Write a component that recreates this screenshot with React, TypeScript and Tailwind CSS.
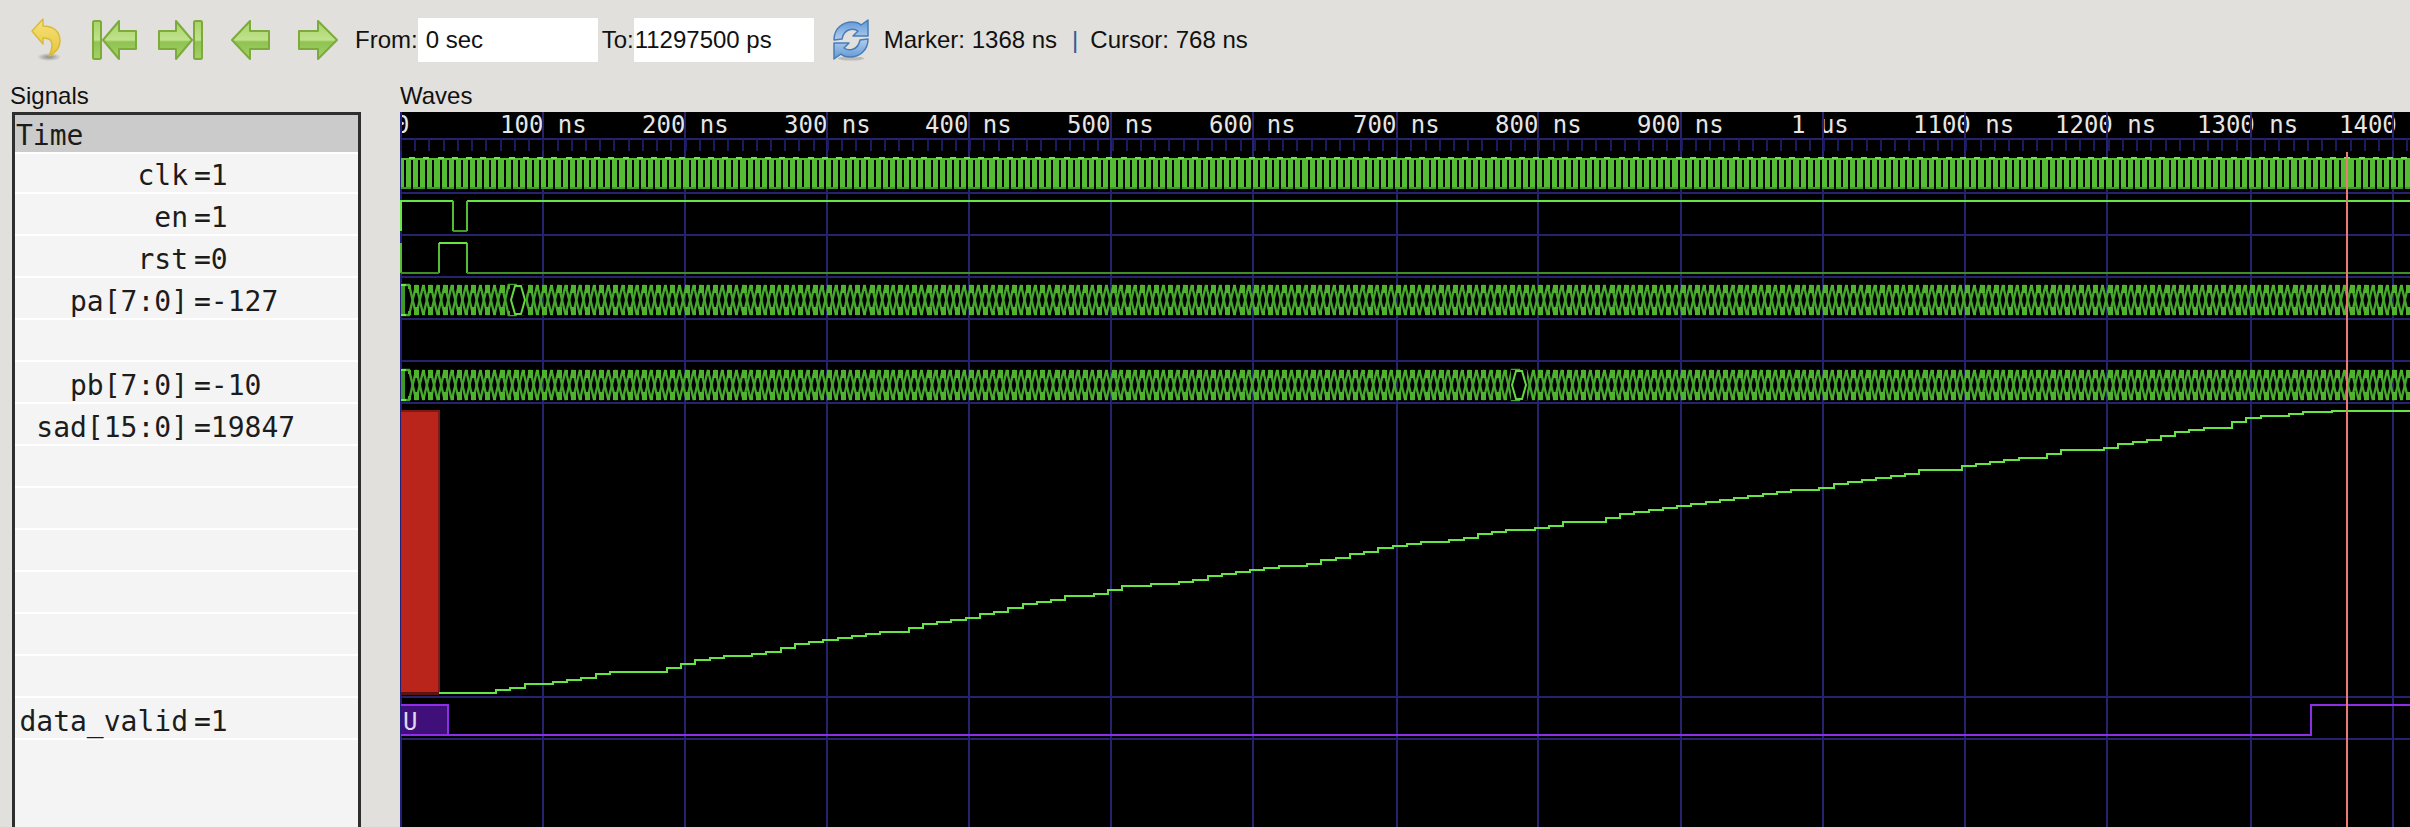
const GRID = [543, 685, 827, 969, 1111, 1253, 1397, 1538, 1681, 1823, 1965, 2107, 2251, 2393];
const ROW_LINES = [193, 235, 277, 319, 361, 403, 697, 739];

const LABELS: [number, string][] = [
  [395, "0"],
  [500, "100 ns"],
  [642, "200 ns"],
  [784, "300 ns"],
  [925, "400 ns"],
  [1067, "500 ns"],
  [1209, "600 ns"],
  [1353, "700 ns"],
  [1495, "800 ns"],
  [1637, "900 ns"],
  [1791, "1 us"],
  [1913, "1100 ns"],
  [2055, "1200 ns"],
  [2197, "1300 ns"],
  [2339, "1400"],
];

const SIGNALS = [
  { name: "clk", value: "=1" },
  { name: "en", value: "=1" },
  { name: "rst", value: "=0" },
  { name: "pa[7:0]", value: "=-127" },
  { name: "", value: "" },
  { name: "pb[7:0]", value: "=-10" },
  { name: "sad[15:0]", value: "=19847" },
  { name: "", value: "" },
  { name: "", value: "" },
  { name: "", value: "" },
  { name: "", value: "" },
  { name: "", value: "" },
  { name: "", value: "" },
  { name: "data_valid", value: "=1" },
];

// hand-read points of the sad trace
const SAD: [number, number][] = [
  [496, 693], [543, 684], [588, 680], [603, 675], [639, 671], [672, 671], [703, 661], [746, 655],
  [766, 655], [810, 643], [848, 639], [909, 631], [937, 623], [969, 619], [1001, 613], [1045, 603],
  [1078, 597], [1111, 593], [1136, 587], [1164, 585], [1193, 583], [1221, 577], [1240, 574], [1272, 569],
  [1320, 564], [1371, 553], [1397, 547], [1422, 543], [1463, 541], [1501, 533], [1538, 529], [1577, 523],
  [1613, 521], [1640, 513], [1681, 507], [1750, 497], [1823, 489], [1868, 481], [1933, 471], [1964, 469],
  [1993, 463], [2047, 457], [2069, 451], [2107, 449], [2162, 439], [2184, 433], [2204, 429], [2232, 427],
  [2250, 421], [2262, 418], [2285, 416], [2300, 415], [2312, 411],
];

function sadAt(x: number) {
  for (let i = 1; i < SAD.length; i++) {
    if (x <= SAD[i][0]) {
      const [x0, y0] = SAD[i - 1];
      const [x1, y1] = SAD[i];
      return y0 + ((x - x0) / (x1 - x0)) * (y1 - y0);
    }
  }
  return 411;
}

function sadPath() {
  let d = "M439 693 H496";
  for (let x = 496; x < 2320; x += 14.23) {
    const y = Math.round(sadAt(x + 14) / 2) * 2;
    d += ` V${y} H${(x + 14.23).toFixed(1)}`;
  }
  return d + " V411 H2410";
}

// the clk trace is too fine for the pixels: it reads as bars with black slits
function clkSlits() {
  let up = "";
  let down = "";
  let tops = "";
  for (let k = 0; k * 7.115 < 2012; k++) {
    const x = Math.round(405 + k * 7.115);
    if (k % 2 === 0) {
      up += `M${x} 160 V187 `;
    } else {
      down += `M${x} 160 V189 `;
      tops += `M${x - 3} 158 H${x + 3} `;
    }
  }
  return { up, down, tops };
}

function busPaths(top: number, bottom: number, eye: number) {
  const step = 7.115;
  let a = `M402 ${top}`;
  let b = `M402 ${bottom}`;
  let blocks = "";
  let small = "";
  let high = false;
  for (let k = 1; k * step < 2012; k++) {
    const x = 402 + k * step;
    const nearEye = Math.abs(x - eye) < 9;
    if (!nearEye) {
      const edge = `M${Math.round(x)} `;
      if (k % 2 === 0) blocks += `${edge}${top} V${top + 8} ${edge}${bottom - 8} V${bottom} `;
      else small += `${edge}${top} V${top + 4} ${edge}${bottom - 4} V${bottom} `;
    }
    if (Math.abs(x - eye) >= step / 2) high = !high;
    a += ` L${x.toFixed(1)} ${high ? top : bottom}`;
    b += ` L${x.toFixed(1)} ${high ? bottom : top}`;
  }
  return { a, b, blocks, small };
}

function Bus({ top, eye }: { top: number; eye: number }) {
  const bottom = top + 30;
  const mid = top + 15;
  const { a, b, blocks, small } = busPaths(top, bottom, eye);
  return (
    <g>
      <path d={a} stroke="#45a52c" strokeWidth="2.4" fill="none" />
      <path d={b} stroke="#45a52c" strokeWidth="2.4" fill="none" />
      <path d={blocks} stroke="#4fb32e" strokeWidth="5" fill="none" shapeRendering="crispEdges" />
      <path d={small} stroke="#4fb32e" strokeWidth="3" fill="none" shapeRendering="crispEdges" />
      {/* gap in the transitions, where the value holds for two clocks */}
      <path
        d={`M${eye - 8} ${top} H${eye + 8} V${bottom} H${eye - 8} Z`}
        fill="#000"
        shapeRendering="crispEdges"
      />
      <path
        d={`M${eye - 7} ${mid} L${eye - 3} ${top + 1} H${eye + 3} L${eye + 7} ${mid} L${eye + 3} ${bottom - 1} H${eye - 3} Z`}
        stroke="#63d840"
        strokeWidth="2"
        fill="none"
      />
      <path d={`M403 ${top} V${bottom}`} stroke="#3f9a2a" strokeWidth="4" shapeRendering="crispEdges" />
      <path d={`M401 ${top} H406 M401 ${bottom} H406`} stroke="#6ce648" strokeWidth="2" shapeRendering="crispEdges" />
    </g>
  );
}

function WaveChart() {
  const clk = clkSlits();
  const ticks: number[] = [];
  for (let k = 0; k < 142; k++) ticks.push(Math.round(401 + k * 14.23));

  return (
    <svg
      width="2010"
      height="715"
      viewBox="400 112 2010 715"
      className="block bg-black font-['DejaVu_Sans_Mono',monospace] text-[24px]"
    >
      {LABELS.map(([x, label]) => (
        <text key={label} x={x} y="133" fill="#e6e6e6" xmlSpace="preserve">
          {label}
        </text>
      ))}

      <g shapeRendering="crispEdges" fill="none">
        <path d="M401 112 V827" stroke="#20207c" strokeWidth="2" />
        {GRID.map((x) => (
          <path key={x} d={`M${x} 112 V827`} stroke="#25226e" strokeWidth="2" />
        ))}
        <path d="M400 139 H2410" stroke="#25226e" strokeWidth="2" />
        {ticks.map((x) => (
          <path key={x} d={`M${x} 139 V151`} stroke="#1d1b5c" strokeWidth="2" />
        ))}
        {ROW_LINES.map((y) => (
          <path key={y} d={`M400 ${y} H2410`} stroke="#25226e" strokeWidth="2" />
        ))}

        {/* clk */}
        <rect x="401" y="158" width="2009" height="31" fill="#54bd33" />
        <path d="M401 188 H2410" stroke="#3f9a2a" strokeWidth="2" />
        <path d={clk.up} stroke="#000" strokeWidth="2" />
        <path d={clk.down} stroke="#000" strokeWidth="2" />
        <path d={clk.tops} stroke="#6ce648" strokeWidth="2" />

        {/* en */}
        <path d="M401 231 V201 H453 M467 201 H2410" stroke="#66e644" strokeWidth="2" />
        <path d="M453 201 V231 M467 201 V231" stroke="#54bd33" strokeWidth="2" />
        <path d="M453 231 H467" stroke="#3f9a2a" strokeWidth="2" />

        {/* rst */}
        <path d="M401 243 V273 M439 243 V273 M467 243 V273" stroke="#54bd33" strokeWidth="2" />
        <path d="M439 243 H467" stroke="#66e644" strokeWidth="2" />
        <path d="M401 273 H439 M467 273 H2410" stroke="#3f8f28" strokeWidth="2" />

        {/* sad */}
        <rect x="401" y="411" width="38" height="282" fill="#b9251a" />
        <path d="M401 411 H439 V693" stroke="#7c1b14" strokeWidth="2" />
        <path d="M401 693 H439" stroke="#5f130e" strokeWidth="3" />
        <path d={sadPath()} stroke="#66e644" strokeWidth="2" />

        {/* data_valid */}
        <rect x="401" y="705" width="47" height="30" fill="#40107a" />
        <path d="M401 705 H448 V735 M401 735 H2311 V705 H2410" stroke="#8f2ee8" strokeWidth="2" />
      </g>

      <Bus top={285} eye={518} />
      <Bus top={370} eye={1519} />

      <text x="403" y="730" fill="#e0d8ee">
        U
      </text>

      <path d="M2347 152 V827" stroke="#ea7b74" strokeWidth="2" shapeRendering="crispEdges" />
    </svg>
  );
}

function ArrowFill({ id }: { id: string }) {
  return (
    <linearGradient id={id} x1="0" y1="0" x2="0" y2="1">
      <stop offset="0" stopColor="#a9d368" />
      <stop offset="0.5" stopColor="#bfe28b" />
      <stop offset="0.55" stopColor="#8fc352" />
      <stop offset="1" stopColor="#a6d067" />
    </linearGradient>
  );
}

function GreenArrow({ points, bar, width }: { points: string; bar?: number; width: number }) {
  const id = `arrow-${width}-${bar ?? 0}-${points.length}-${points.slice(0, 2)}`;
  return (
    <svg width={width} height="40" viewBox={`0 0 ${width} 40`} className="shrink-0">
      <defs>
        <ArrowFill id={id} />
      </defs>
      {bar !== undefined && (
        <rect x={bar + 1} y="1" width="8" height="38" rx="1.5" fill={`url(#${id})`} stroke="#7cab3c" strokeWidth="2" />
      )}
      <polygon points={points} fill={`url(#${id})`} stroke="#7cab3c" strokeWidth="2" strokeLinejoin="round" />
    </svg>
  );
}

function UndoIcon() {
  return (
    <svg width="32" height="44" viewBox="0 0 32 44" className="shrink-0">
      <defs>
        <linearGradient id="undo-fill" x1="0" y1="0" x2="0" y2="1">
          <stop offset="0" stopColor="#f6e27a" />
          <stop offset="1" stopColor="#e6c63c" />
        </linearGradient>
        <radialGradient id="undo-shadow">
          <stop offset="0" stopColor="#8a8a86" />
          <stop offset="1" stopColor="#e1e0dc" />
        </radialGradient>
      </defs>
      <ellipse cx="19" cy="39" rx="12" ry="4" fill="url(#undo-shadow)" />
      <path
        d="M2 13 L13 1 V8 C23 8 30 13 30 23 C30 30 25 35 19 38 C22 32 23 27 21 23 C19 20 16 20 13 20 V26 Z"
        fill="url(#undo-fill)"
        stroke="#d9bb3c"
        strokeWidth="1.5"
        strokeLinejoin="round"
      />
    </svg>
  );
}

function RefreshIcon() {
  const arrow = "M2 21 C2 9 11 3 20 3 C24 3 27 4 29 6 L36 1 V17 H21 L26 12 C22 9 12 9 10 20 Z";
  return (
    <svg width="38" height="42" viewBox="0 0 38 42" className="shrink-0">
      <defs>
        <linearGradient id="refresh-fill" x1="0" y1="0" x2="0" y2="1">
          <stop offset="0" stopColor="#5f97d6" />
          <stop offset="1" stopColor="#b3cfee" />
        </linearGradient>
      </defs>
      <ellipse cx="19" cy="39.5" rx="13" ry="2" fill="#bdbcb8" />
      <path d={arrow} fill="url(#refresh-fill)" stroke="#4a7cb8" strokeWidth="1.5" strokeLinejoin="round" />
      <path
        d={arrow}
        transform="rotate(180 19 20.5)"
        fill="url(#refresh-fill)"
        stroke="#4a7cb8"
        strokeWidth="1.5"
        strokeLinejoin="round"
      />
    </svg>
  );
}

function Toolbar() {
  return (
    <div className="flex h-[80px] shrink-0 items-center pl-[30px] text-[24px] text-[#111]">
      <UndoIcon />
      <div className="ml-[30px]">
        <GreenArrow width={45} bar={0} points="11,20 27,1 27,11 44,11 44,29 27,29 27,39" />
      </div>
      <div className="ml-[21px]">
        <GreenArrow width={45} bar={35} points="34,20 18,1 18,11 1,11 1,29 18,29 18,39" />
      </div>
      <div className="ml-[28px]">
        <GreenArrow width={40} points="1,20 19,1 19,11 38,11 38,29 19,29 19,39" />
      </div>
      <div className="ml-[27px]">
        <GreenArrow width={40} points="39,20 20,1 20,11 1,11 1,29 20,29 20,39" />
      </div>
      <span className="ml-[17px]">From:</span>
      <input readOnly value="0 sec" className="h-[44px] w-[180px] bg-white pl-[8px] outline-none" />
      <span className="ml-[4px]">To:</span>
      <input readOnly value="11297500 ps" className="h-[44px] w-[180px] bg-white pl-[1px] outline-none" />
      <div className="ml-[18px]">
        <RefreshIcon />
      </div>
      <span className="ml-[14px]">Marker: 1368 ns</span>
      <span className="ml-[15px] text-[#2b5c94]">|</span>
      <span className="ml-[12px]">Cursor: 768 ns</span>
    </div>
  );
}

function SignalRow({ name, value, first }: { name: string; value: string; first?: boolean }) {
  return (
    <div
      className={
        first
          ? "flex h-[40px] items-center border-b-2 border-white pt-[5px]"
          : "flex h-[42px] items-center border-b-2 border-white pt-[7px]"
      }
    >
      <span className="w-[173px] text-right">{name}</span>
      <span className="ml-[6px]">{value}</span>
    </div>
  );
}

function SignalList() {
  return (
    <div className="ml-[12px] flex h-[715px] w-[349px] shrink-0 flex-col border-x-[3px] border-t-[3px] border-[#2e2e2e] bg-[#f4f4f4] font-['DejaVu_Sans_Mono',monospace] text-[28px] leading-none text-[#1c1c1c]">
      <div className="flex h-[39px] shrink-0 items-center border-b-2 border-white bg-[#cbcbcb] pl-[1px] pt-[5px]">
        Time
      </div>
      {SIGNALS.map((s, i) => (
        <SignalRow key={i} name={s.name} value={s.value} first={i === 0} />
      ))}
    </div>
  );
}

export default function App() {
  return (
    <div className="flex h-[827px] w-[2410px] flex-col overflow-hidden bg-[#e1e0dc] font-['Liberation_Sans',Arial,sans-serif]">
      <Toolbar />
      <div className="flex h-[32px] shrink-0 items-center text-[24px] text-[#111]">
        <span className="ml-[10px] w-[390px]">Signals</span>
        <span>Waves</span>
      </div>
      <div className="flex">
        <SignalList />
        <div className="ml-[39px]">
          <WaveChart />
        </div>
      </div>
    </div>
  );
}
